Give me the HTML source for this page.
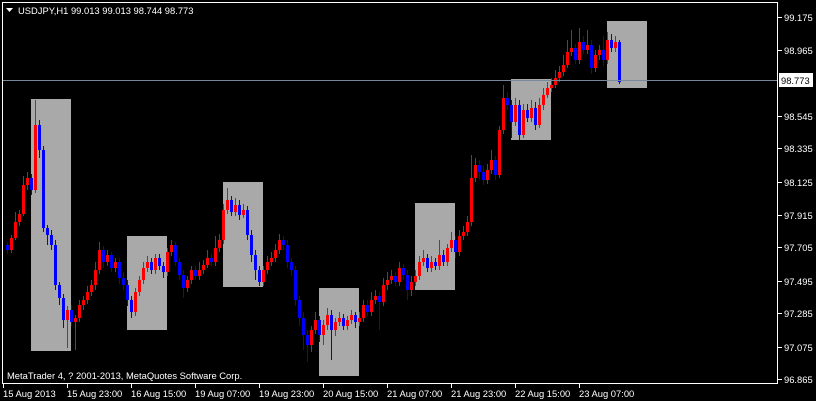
<!DOCTYPE html>
<html><head><meta charset="utf-8"><style>
html,body{margin:0;padding:0;background:#000;width:816px;height:401px;overflow:hidden}
svg{display:block}
text{font-family:"Liberation Sans",sans-serif;font-size:9.4px;fill:#fff}
</style></head><body>
<svg width="816" height="401" xmlns="http://www.w3.org/2000/svg">
<rect width="816" height="401" fill="#000"/>
<g fill="#a9a9a9">
<rect x="31" y="99" width="40" height="252"/>
<rect x="127" y="236" width="40" height="94"/>
<rect x="223" y="182" width="40" height="105"/>
<rect x="319" y="288" width="40" height="88"/>
<rect x="415" y="203" width="40" height="87"/>
<rect x="511" y="79" width="40" height="61"/>
<rect x="607" y="21" width="40" height="67"/>
</g>
<path fill="none" stroke="#f00" stroke-width="1" d="M11.5 235V253M15.5 212V240M19.5 210V226M23.5 176V216M27.5 172V190M35.5 100V193M67.5 306V348M75.5 315V350M79.5 300V322M83.5 296V310M87.5 286V304M91.5 280V296M95.5 262V290M99.5 242V274M107.5 250V266M115.5 258V272M135.5 288V316M139.5 276V296M143.5 262V284M147.5 256V272M155.5 254V274M167.5 248V276M171.5 240V256M187.5 276V292M191.5 266V284M199.5 262V280M203.5 260V274M207.5 250V268M215.5 236V266M219.5 234V252M223.5 204V244M227.5 188V214M235.5 198V216M243.5 204V218M263.5 266V286M267.5 256V274M271.5 252V266M275.5 244V262M279.5 234V254M311.5 326V352M315.5 312V334M323.5 320V345M327.5 308V330M335.5 318V336M339.5 312V326M347.5 316V330M351.5 310V324M359.5 312V326M363.5 300V322M371.5 292V316M375.5 290V304M383.5 278V306M387.5 272V290M391.5 270V284M399.5 262V286M411.5 276V296M415.5 270V286M419.5 256V280M423.5 250V266M431.5 256V272M439.5 240V270M447.5 244V266M451.5 232V252M459.5 230V256M463.5 226V240M467.5 216V236M471.5 155V226M475.5 158V182M487.5 164V184M491.5 150V174M499.5 126V178M503.5 85V134M515.5 98V126M523.5 104V138M531.5 100V122M539.5 98V128M543.5 88V110M547.5 82V98M551.5 78V92M555.5 70V88M559.5 66V82M563.5 55V76M567.5 40V68M571.5 30V56M579.5 28V64M587.5 30V54M595.5 50V72M599.5 45V60M607.5 32V64M615.5 36V52"/>
<path fill="none" stroke="#f00" stroke-width="3" d="M11.5 238V250M15.5 222V238M19.5 214V222M23.5 185V214M27.5 178V185M35.5 125V190M67.5 310V320M75.5 318V322M79.5 305V318M83.5 300V305M87.5 292V300M91.5 285V292M95.5 270V285M99.5 250V270M107.5 255V262M115.5 262V268M135.5 292V312M139.5 280V292M143.5 268V280M147.5 262V268M155.5 258V270M167.5 252V272M171.5 245V252M187.5 280V288M191.5 270V280M199.5 270V276M203.5 265V270M207.5 258V265M215.5 248V262M219.5 240V248M223.5 210V240M227.5 200V210M235.5 205V212M243.5 210V215M263.5 270V282M267.5 262V270M271.5 258V262M275.5 250V258M279.5 240V250M311.5 330V345M315.5 320V330M323.5 325V335M327.5 315V325M335.5 322V330M339.5 318V322M347.5 320V326M351.5 315V320M359.5 318V322M363.5 305V318M371.5 300V312M375.5 296V300M383.5 285V302M387.5 280V285M391.5 276V280M399.5 268V282M411.5 282V290M415.5 276V282M419.5 262V276M423.5 258V262M431.5 262V268M439.5 255V266M447.5 248V262M451.5 240V248M459.5 236V252M463.5 232V236M467.5 222V232M471.5 178V222M475.5 165V178M487.5 170V180M491.5 160V170M499.5 130V175M503.5 98V130M515.5 105V122M523.5 110V135M531.5 108V118M539.5 105V125M543.5 95V105M547.5 88V95M551.5 85V88M555.5 78V85M559.5 72V78M563.5 65V72M567.5 52V65M571.5 48V52M579.5 42V60M587.5 45V50M595.5 55V68M599.5 50V55M607.5 40V60M615.5 42V48"/>
<path fill="none" stroke="#00f" stroke-width="1" d="M7.5 242V254M31.5 174V195M39.5 120V158M43.5 146V232M47.5 225V245M51.5 230V250M55.5 240V290M59.5 282V305M63.5 294V328M71.5 305V326M103.5 246V268M111.5 252V272M119.5 258V284M123.5 272V290M127.5 280V306M131.5 296V318M151.5 258V274M159.5 254V270M163.5 262V278M175.5 242V266M179.5 258V280M183.5 270V298M195.5 266V280M211.5 254V266M231.5 196V216M239.5 200V220M247.5 206V240M251.5 230V262M255.5 250V280M259.5 266V286M283.5 236V250M287.5 240V268M291.5 258V276M295.5 266V306M299.5 296V326M303.5 312V350M307.5 330V362M319.5 316V342M331.5 310V360M343.5 314V330M355.5 312V328M367.5 300V316M379.5 292V330M395.5 272V286M403.5 264V280M407.5 270V300M427.5 254V272M435.5 258V270M443.5 250V266M455.5 236V258M479.5 160V180M483.5 166V185M495.5 156V180M507.5 92V110M511.5 100V138M519.5 100V140M527.5 104V122M535.5 102V130M575.5 44V64M583.5 36V54M591.5 40V74M603.5 36V66M611.5 34V52M619.5 40V84"/>
<path fill="none" stroke="#00f" stroke-width="3" d="M7.5 245V250M31.5 178V190M39.5 125V150M43.5 150V228M47.5 228V235M51.5 235V245M55.5 245V285M59.5 285V298M63.5 298V320M71.5 310V322M103.5 250V262M111.5 255V268M119.5 262V278M123.5 278V285M127.5 285V300M131.5 300V312M151.5 262V270M159.5 258V266M163.5 266V272M175.5 245V262M179.5 262V275M183.5 275V288M195.5 270V276M211.5 258V262M231.5 200V212M239.5 205V215M247.5 210V235M251.5 235V255M255.5 255V270M259.5 270V282M283.5 240V245M287.5 245V262M291.5 262V270M295.5 270V300M299.5 300V318M303.5 318V335M307.5 335V345M319.5 320V335M331.5 315V330M343.5 318V326M355.5 315V322M367.5 305V312M379.5 296V302M395.5 276V282M403.5 268V275M407.5 275V290M427.5 258V268M435.5 262V266M443.5 255V262M455.5 240V252M479.5 165V172M483.5 172V180M495.5 160V175M507.5 98V105M511.5 105V122M519.5 105V135M527.5 110V118M535.5 108V125M575.5 48V60M583.5 42V50M591.5 45V68M603.5 50V60M611.5 40V48M619.5 42V82"/>
<line x1="2" y1="80.5" x2="777" y2="80.5" stroke="#778899"/>
<rect x="2.5" y="2.5" width="775" height="381" fill="none" stroke="#fff"/>
<path d="M6 8h7l-3.5 4z" fill="#fff"/>
<text x="18" y="14">USDJPY,H1  99.013 99.013 98.744 98.773</text>
<text x="7" y="379">MetaTrader 4, ? 2001-2013, MetaQuotes Software Corp.</text>
<g stroke="#fff">
<path d="M778 17.5h4M778 50.5h4M778 116.5h4M778 148.5h4M778 182.5h4M778 215.5h4M778 247.5h4M778 281.5h4M778 313.5h4M778 347.5h4M778 379.5h4"/>
<path d="M3.5 383v5M67.5 383v5M131.5 383v5M195.5 383v5M259.5 383v5M323.5 383v5M387.5 383v5M451.5 383v5M515.5 383v5M579.5 383v5"/>
</g>
<text x="784" y="21">99.175</text>
<text x="784" y="54">98.965</text>
<text x="784" y="120">98.545</text>
<text x="784" y="152">98.335</text>
<text x="784" y="186">98.125</text>
<text x="784" y="219">97.915</text>
<text x="784" y="251">97.705</text>
<text x="784" y="285">97.495</text>
<text x="784" y="317">97.285</text>
<text x="784" y="351">97.075</text>
<text x="784" y="383">96.865</text>
<text x="3" y="397">15 Aug 2013</text>
<text x="67" y="397">15 Aug 23:00</text>
<text x="131" y="397">16 Aug 15:00</text>
<text x="195" y="397">19 Aug 07:00</text>
<text x="259" y="397">19 Aug 23:00</text>
<text x="323" y="397">20 Aug 15:00</text>
<text x="387" y="397">21 Aug 07:00</text>
<text x="451" y="397">21 Aug 23:00</text>
<text x="515" y="397">22 Aug 15:00</text>
<text x="579" y="397">23 Aug 07:00</text>
<rect x="779" y="73" width="34" height="14" fill="#fff"/>
<text x="781" y="84" style="fill:#000">98.773</text>
</svg>
</body></html>
